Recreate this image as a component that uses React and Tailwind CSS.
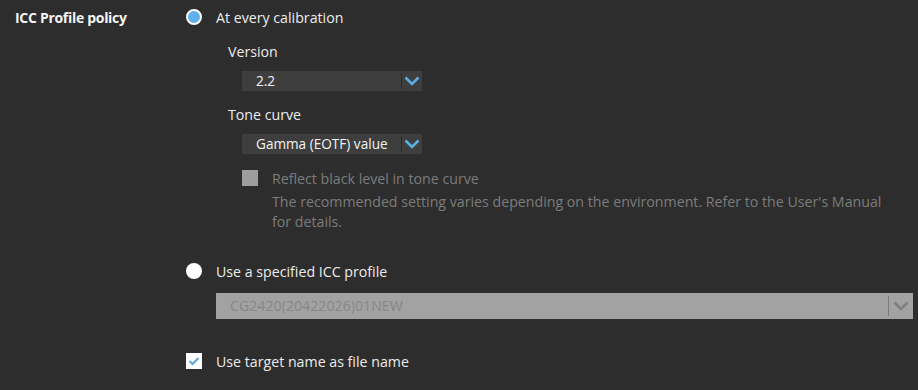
import React from "react";

const Chevron = ({ color }) => (
  <svg width="16" height="10" viewBox="0 0 16 10" fill="none">
    <path d="M1.5 1.5 L8 8 L14.5 1.5" stroke={color} strokeWidth="2.6" />
  </svg>
);

const Select = ({ value }) => (
  <div className="ml-[14px] flex h-[20px] w-[180px] items-center bg-[#3e3e3e]">
    <span className="flex-1 whitespace-nowrap pl-[14px] text-[13.6px] text-[#f2f2f2]">{value}</span>
    <div className="h-[16px] w-px bg-[#2a2a2a]" />
    <div className="flex w-[20px] items-center justify-center">
      <Chevron color="#5caee6" />
    </div>
  </div>
);

export default function App() {
  return (
    <div
      className="flex h-[390px] w-[918px] bg-[#2d2d2d] text-[14.2px] leading-[20px] text-[#ececec]"
      style={{ fontFamily: '"Open Sans", "Noto Sans", sans-serif' }}
    >
      <div className="w-[186px] pl-[15px] pt-[8px] text-[14px] font-bold text-[#f4f4f4] tracking-[-0.3px]">
        ICC Profile policy
      </div>
      <div className="flex flex-1 flex-col">
        <div className="flex h-[34px] items-center">
          <div className="h-[16px] w-[16px] rounded-full border-2 border-white bg-[#5eb1ea]" />
          <span className="ml-[14px] pt-[1px]">At every calibration</span>
        </div>
        <div className="flex flex-col pl-[42px]">
          <div className="mt-[8px] h-[20px]">Version</div>
          <div className="mt-[9px]">
            <Select value="2.2" />
          </div>
          <div className="mt-[14px] h-[20px]">Tone curve</div>
          <div className="mt-[9px]">
            <Select value="Gamma (EOTF) value" />
          </div>
          <div className="mt-[14px] flex h-[20px] items-center">
            <div className="ml-[14px] h-[16px] w-[16px] bg-[#9d9d9d]" />
            <span className="ml-[14px] pt-[1px] text-[#7c7c7c]">Reflect black level in tone curve</span>
          </div>
          <div className="mt-[4px] pl-[44px] pr-[30px] text-[#7c7c7c]">
            The recommended setting varies depending on the environment. Refer to the User's Manual for details.
          </div>
        </div>
        <div className="mt-[22px] flex h-[34px] items-center">
          <div className="h-[16px] w-[16px] rounded-full bg-white" />
          <span className="ml-[14px] pt-[2px]">Use a specified ICC profile</span>
        </div>
        <div className="ml-[30px] mt-[5px] flex h-[26px] w-[697px] items-center bg-[#a2a2a2]">
          <span className="flex-1 pl-[14px] text-[#878787]">CG2420(20422026)01NEW</span>
          <div className="h-[20px] w-px bg-[#7a7a7a]" />
          <div className="flex w-[24px] items-center justify-center">
            <Chevron color="#7f7f7f" />
          </div>
        </div>
        <div className="mt-[25px] flex h-[34px] items-center">
          <div className="flex h-[16px] w-[16px] items-center justify-center bg-white">
            <svg width="12" height="10" viewBox="0 0 12 10" fill="none">
              <path d="M1.5 5 L4.5 8 L10.5 2" stroke="#5aa7d8" strokeWidth="2" />
            </svg>
          </div>
          <span className="ml-[14px] pt-[1px]">Use target name as file name</span>
        </div>
      </div>
    </div>
  );
}
